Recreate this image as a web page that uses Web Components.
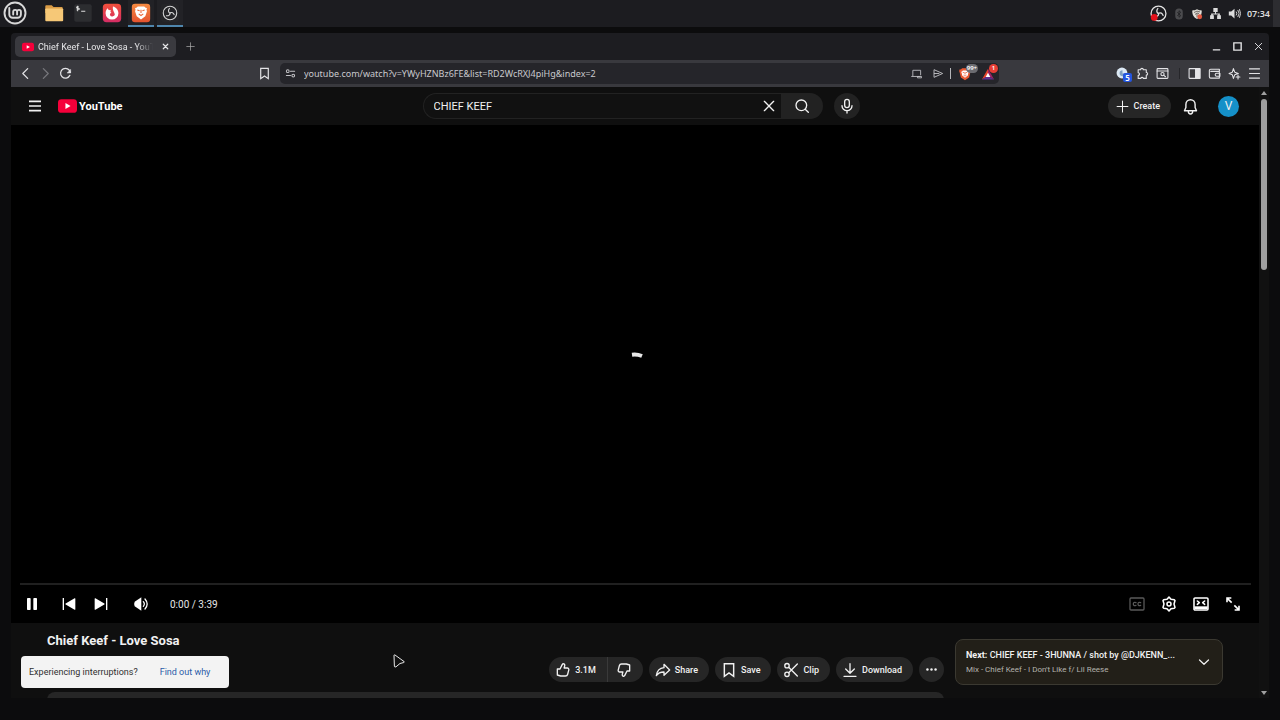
<!DOCTYPE html>
<html lang="en">
<head>
<meta charset="utf-8">
<meta name="viewport" content="width=device-width, initial-scale=1">
<title>Chief Keef - Love Sosa - YouTube</title>
<style>
  html, body { margin: 0; height: 100%; background: #0b0b0c; }
  body { font-family: Roboto, "Liberation Sans", sans-serif; color: #f1f1f1; overflow: hidden; }
</style>
</head>
<body>
<desk-top>
  <task-panel slot="panel"></task-panel>
  <browser-window>
    <tab-strip slot="tabs">Chief Keef - Love Sosa - YouTube</tab-strip>
    <nav-bar slot="nav" url="youtube.com/watch?v=YWyHZNBz6FE&amp;list=RD2WcRXJ4piHg&amp;index=2"></nav-bar>
    <yt-masthead query="CHIEF KEEF"></yt-masthead>
    <video-player time="0:00 / 3:39"></video-player>
    <watch-info>
      <span slot="title">Chief Keef - Love Sosa</span>
      <next-card slot="side">
        <span slot="label">Next:</span>
        <span slot="title">CHIEF KEEF - 3HUNNA / shot by @DJKENN_...</span>
        <span slot="list">Mix - Chief Keef - I Don't Like f/ Lil Reese</span>
      </next-card>
    </watch-info>
    <yt-toast slot="overlay">Experiencing interruptions?<a slot="action" href="#why">Find out why</a></yt-toast>
  </browser-window>
  <mouse-pointer slot="pointer"></mouse-pointer>
</desk-top>

<script>
const define = (name, html, setup) => customElements.define(name, class extends HTMLElement {
  constructor() {
    super();
    this.attachShadow({ mode: "open" }).innerHTML = BASE + html;
  }
  connectedCallback() { if (setup) setup(this, this.shadowRoot); }
});

const BASE = `<style>
  *, *::before, *::after { box-sizing: border-box; }
  :host { box-sizing: border-box; display: block; }
  button, input { font: inherit; color: inherit; background: none; border: 0; margin: 0; padding: 0; outline: 0; min-width: 0; }
  button { display: inline-flex; align-items: center; justify-content: center; cursor: pointer; flex: none; }
</style>`;

const line = (w, body, vb = 24) => `<svg viewBox="0 0 ${vb} ${vb}" fill="none" stroke="currentColor" stroke-width="${w}" stroke-linejoin="round" stroke-linecap="round">${body}</svg>`;
const solid = (body, vb = 24) => `<svg viewBox="0 0 ${vb} ${vb}" fill="currentColor">${body}</svg>`;
const THUMB = '<path d="M3.5 10.5h4L11 3.6c.3-.7 1-1.1 1.7-1 1.3.1 2.2 1.4 1.9 2.7L13.7 9h4.8c1.500 0 2.600 1.400 2.200 2.900l-1.700 6.500c-.4 1.500-1.700 2.600-3.300 2.600H8.500L3.500 19.500z"/>';
const ARM = '<path d="M12 12.500Q7.500 9 11.500 4.500"/>';
const OBS = `<circle cx="12" cy="12" r="10.500"/>${ARM}<g transform="rotate(120 12 12)">${ARM}</g><g transform="rotate(240 12 12)">${ARM}</g>`;

const ICONS = {
  mint: `<svg viewBox="0 0 24 24" fill="none" stroke="#d8d8d8"><circle cx="12" cy="12" r="10.500" stroke-width="1.900"/><path d="M6.300 7v6.500a3.300 3.300 0 0 0 3.300 3.300h5a3.300 3.300 0 0 0 3.300-3.300v-2.700a1.900 1.900 0 0 0-3.800 0v2.700M14.100 13.500v-2.700a1.900 1.900 0 0 0-3.900 0v2.700" stroke-width="1.900" stroke-linecap="round"/></svg>`,
  folder: `<svg viewBox="0 0 24 24"><path d="M2.500 4.500q0-1 1-1h6l2 2h9q1 0 1 1V12h-19z" fill="#d99b45"/><rect x="2.500" y="7" width="19.500" height="14" rx="1" fill="#f6c877"/></svg>`,
  terminal: `<svg viewBox="0 0 24 24"><rect x="2.500" y="2.500" width="19" height="19" rx="2" fill="#2c2d30"/><path d="M7.500 5.500q-2.500-.8-2.500.6t2.500 1.400-2.500 1.200M6.200 4v6M10 10h4.500" fill="none" stroke="#ddd" stroke-width="1.100"/></svg>`,
  firefox: `<svg viewBox="0 0 24 24"><defs><linearGradient id="g" x2="0" y2="1"><stop stop-color="#f2503b"/><stop offset="1" stop-color="#d52d65"/></linearGradient></defs><rect x="2" y="2" width="20" height="20" rx="4" fill="url(#g)"/><path d="M13 4.800c3.500.8 6 3.700 6 7.400a7 7 0 0 1-14 0c0-2.200.8-4.200 2.200-5.400l1.200 2 2.400.3-.6 1.700 1.200.8c-1 .3-1.700 1-1.700 1.900a2.600 2.600 0 1 0 4.900-1.500c-.4-1.500-2.300-3.800-1.600-7.200z" fill="#fff"/></svg>`,
  brave: `<svg viewBox="0 0 24 24"><defs><linearGradient id="g" x2="0" y2="1"><stop stop-color="#f58a41"/><stop offset="1" stop-color="#e4532f"/></linearGradient></defs><rect x="2" y="2" width="20" height="20" rx="3.500" fill="url(#g)"/><path d="M8.500 5h7l1.500 1.300 1.500.2-.5 2 .5 1.500-1.800 5.500L12 19l-4.700-3.500L5.500 10l.5-1.500-.5-2 1.500-.2z" fill="#fff"/><path d="M8 8.800l2.500.7M16 8.800l-2.500.7M12 8.500v3.500M9.500 13l2.500 1.800 2.500-1.800" fill="none" stroke="#e9683a" stroke-width="1.200"/></svg>`,
  obs: `<svg viewBox="0 0 24 24"><rect x="2" y="2" width="20" height="20" rx="4" fill="#252528"/><g transform="translate(3.600 3.600) scale(.7)" fill="none" stroke="#d5d5d5" stroke-width="1.700">${OBS}</g></svg>`,
  obsTray: `<svg viewBox="0 0 24 24"><g fill="none" stroke="#e5e5e5" stroke-width="1.800">${OBS}</g><circle cx="6" cy="17.500" r="4.800" fill="#e3101a"/></svg>`,
  bluetooth: `<svg viewBox="0 0 24 24"><rect x="4.500" y="1" width="15" height="22" rx="7" fill="#4b4b4e"/><path d="M8.500 8l7 7.500-3.500 3V5.500l3.500 3-7 7.500" fill="none" stroke="#1f1f22" stroke-width="1.500"/></svg>`,
  shield: `<svg viewBox="0 0 24 24"><path d="M12 2.500c3 2 6 2.300 9.500 2.300 0 8-2 13.500-9.500 17-7.500-3.500-9.500-9-9.500-17C6 4.800 9 4.500 12 2.500z" fill="#e2dfd8"/><path d="M6 9q6-5 12-1M8 13q4-5 8-2M12 11v8" fill="none" stroke="#65605a" stroke-width="1.800"/><circle cx="17.500" cy="17.500" r="4.800" fill="#e2573f"/></svg>`,
  network: solid('<path d="M8 2h8v7h-3v3h7v3h2v7h-7v-7h2v-1H7v1h2v7H2v-7h2v-3h7V9H8z"/>'),
  sound: `<svg viewBox="0 0 24 24"><path d="M1.500 8.500H6L12 3v18l-6-5.500H1.500z" fill="currentColor"/><path d="M15 8.500q2.500 3.500 0 7M18 5.500q5 6.500 0 13M21 4q4.500 8 0 16" fill="none" stroke="currentColor" stroke-width="1.700"/></svg>`,
  ytMark: `<svg viewBox="0 0 28 20"><rect width="28" height="20" rx="5" fill="#f5003a"/><path d="M11 5.700v8.600l7.500-4.300z" fill="#fff"/></svg>`,
  close: line(2, '<path d="M5 5l14 14M19 5L5 19"/>'),
  closeBold: line(3.200, '<path d="M6 6l12 12M18 6L6 18"/>'),
  plus: line(1.900, '<path d="M12 2v20M2 12h20"/>'),
  minimize: line(2.600, '<path d="M4 19.500h16" stroke-linecap="butt"/>'),
  maximize: line(3, '<path d="M4 4h16v16H4z" stroke-linejoin="miter"/>'),
  back: line(2.300, '<path d="M16 3l-9 9 9 9"/>'),
  forward: line(2.300, '<path d="M8 3l9 9-9 9"/>'),
  reload: line(2.300, '<path d="M20 15.500a9 9 0 1 1 .8-5.500"/><path d="M21.500 5v6h-6z" fill="currentColor" stroke-width="1"/>'),
  bookmark: line(2.200, '<path d="M5 2.500h14v19l-7-5-7 5z" stroke-linejoin="miter"/>'),
  tune: line(2.200, '<circle cx="6" cy="7" r="3"/><path d="M12 7h9M3 16.500h9"/><circle cx="18" cy="16.500" r="3"/>'),
  device: line(1.900, '<path d="M4 17V5h17v10M1.500 18.500h17M15 18.500h8v3h-8z"/>'),
  send: line(2, '<path d="M3 4l18 8-18 8zM3 12h10"/>'),
  lion: `<svg viewBox="0 0 24 24"><path d="M7 2h10l2 2.200 2-.2 1 3-1 3-2 8-7 4.500L5 18 3 10 2 7l1-3 2 .2z" fill="#e95a33"/><path d="M8.500 6h7l3 2.500-1.500 4 .2 1.500-5.200 4.500L6.800 14l.2-1.500-1.500-4z" fill="#fff"/><path d="M8 9l3 1M16 9l-3 1M12 9v4M9.500 14l2.500 1.700 2.500-1.700" fill="none" stroke="#e95a33" stroke-width="1.300"/></svg>`,
  bat: `<svg viewBox="0 0 24 24"><path d="M12 3L1.500 21.500 12 15z" fill="#e5432b"/><path d="M12 3l10.500 18.500L12 15z" fill="#9c2063"/><path d="M1.500 21.500h21L12 15z" fill="#5f2f8f"/><path d="M12 10l-4 7h8z" fill="#fff"/></svg>`,
  ext: `<svg viewBox="0 0 24 24"><circle cx="11" cy="11" r="10" fill="#dce8f4"/><path d="M12 6a5.500 5.500 0 1 0 5.500 6.500L12 12z" fill="#7f9fc0"/></svg>`,
  puzzle: line(2, '<path d="M4 5h4.500a2.500 2.500 0 0 1 5 0H19v5a2.500 2.500 0 0 1 0 5v6h-5.500a2.300 2.300 0 0 0-4.500 0H4v-5.500a2.500 2.500 0 0 0 0-5z"/>'),
  findPage: line(2, '<rect x="2" y="3" width="20" height="18" rx="1.500"/><path d="M2 7.500h20"/><circle cx="12" cy="13" r="3"/><path d="M14.500 15.500l3 2.500"/>'),
  sidebar: line(2, '<rect x="2" y="3" width="20" height="18" rx="1"/><path d="M14 3h8v18h-8z" fill="currentColor"/>'),
  wallet: line(2, '<path d="M21 8V4H5a2.500 2.500 0 0 0-2.500 2.500V18A2.500 2.500 0 0 0 5 20.500h16V8H5M22 11.500h-6a2.700 2.700 0 0 0 0 5.500h6z"/>'),
  leo: line(2, '<path d="M10 3l2.500 6.500L19 12l-6.500 2.500L10 21l-2-6.500L2 12l6-2.500zM18.500 15v7M15 18.500h7"/>'),
  menu: line(2, '<path d="M2 3.500h20M2 12h20M2 20.500h20" stroke-linecap="butt"/>'),
  menuBold: line(2.600, '<path d="M3 5h18M3 12h18M3 19h18" stroke-linecap="butt"/>'),
  search: line(2, '<circle cx="11" cy="11" r="8"/><path d="M16.800 16.800L21.500 21.500"/>'),
  mic: line(2, '<rect x="8.500" y="2" width="7" height="12.500" rx="3.500"/><path d="M4.500 11.500a7.500 7.500 0 0 0 15 0M12 19v3.500"/>'),
  bell: line(2, '<path d="M12 2.500a6.500 6.500 0 0 0-6.500 6.500v4.500L3.500 18h17l-2-4.500V9A6.500 6.500 0 0 0 12 2.500zM9 19.500a3 3 0 0 0 6 0"/>'),
  pause: solid('<rect x="4.500" y="3" width="5.500" height="18" rx="1.200"/><rect x="14" y="3" width="5.500" height="18" rx="1.200"/>'),
  prev: solid('<path d="M2.500 3h2v18h-2zM21.500 4.200v15.600q0 1.300-1.100.7L7 12.700q-1-.7 0-1.400L20.400 3.500q1.100-.6 1.100.7z"/>'),
  next: solid('<path d="M19.500 3h2v18h-2zM2.500 4.200v15.600q0 1.300 1.100.7L17 12.700q1-.7 0-1.400L3.600 3.500q-1.100-.6-1.100.7z"/>'),
  volume: `<svg viewBox="0 0 24 24"><path d="M12.500 1.800v20.400L2.500 15.500q-1.700-3.500 0-7z" fill="currentColor"/><path d="M15.500 8.500q3 3.500 0 7M18 4.500q6.500 7.500 0 15" fill="none" stroke="currentColor" stroke-width="1.900" stroke-linecap="round"/></svg>`,
  cc: line(1.900, '<rect x="1.500" y="3" width="21" height="18" rx="1.500"/><path d="M10.500 10q-4-1.500-4 2t4 2M17.500 10q-4-1.500-4 2t4 2"/>'),
  gear: line(2.300, '<path d="M12 1.500l3 3.500 5 .8 1 .9-1.500 5.300 1.500 5.300-1 .9-5 .8-3 3.500-3-3.500-5-.8-1-.9L4.500 12 3 6.700l1-.9L9 5z"/><circle cx="12" cy="12" r="3"/>'),
  theater: line(2.300, '<rect x="1.500" y="3" width="21" height="18" rx="1.500"/><path d="M2 17.500h20" stroke-width="4" stroke-linecap="butt"/><path d="M6.500 7.500L9.500 10l-3 2.500M17.500 7.500l-3 2.500 3 2.500"/>'),
  full: line(2.400, '<path d="M3 9.500V3h6.500M3.500 3.500L10 10M14.500 21H21v-6.500M20.500 20.500L14 14" stroke-linejoin="miter" stroke-linecap="butt"/>'),
  like: line(2, THUMB),
  dislike: line(2, `<g transform="rotate(180 12 12)">${THUMB}</g>`),
  share: line(2, '<path d="M13.500 3.500L22 12l-8.500 8v-5C8 15 4.500 16.500 2 20.500 3 13 7 9 13.500 8.500z"/>'),
  clip: line(2, '<circle cx="6" cy="5.500" r="3.300"/><circle cx="6" cy="18.500" r="3.300"/><path d="M8.500 8L21.500 21M8.500 16L21.500 3"/>'),
  download: line(2, '<path d="M12 2.500v14M5.500 10.500l6.500 6.500 6.500-6.500M3 21.500h18"/>'),
  more: solid('<circle cx="4.500" cy="12" r="2.300"/><circle cx="12" cy="12" r="2.300"/><circle cx="19.500" cy="12" r="2.300"/>'),
  chevron: line(2.500, '<path d="M3 8l9 8.500L21 8"/>')
};

define("ui-icon", `<style>
  :host { display: inline-block; flex: none; width: var(--size, 16px); height: var(--size, 16px); }
  svg { display: block; width: 100%; height: 100%; }
</style><span></span>`, (el, root) => { root.querySelector("span").innerHTML = ICONS[el.getAttribute("name")]; });

define("desk-top", `<style>
  :host { display: flex; flex-direction: column; height: 100vh; position: relative; background: #0c0c0d; }
  main { flex: 1; min-height: 0; display: flex; padding: 6px 11px 22px; }
  ::slotted(browser-window) { flex: 1; min-width: 0; }
</style><slot name="panel"></slot><main><slot></slot></main><slot name="pointer"></slot>`);

define("task-panel", `<style>
  :host { display: flex; align-items: stretch; justify-content: space-between; height: 27px; background: #1c1c20; color: #dcdcdc; font: 500 9px "Noto Sans", sans-serif; }
  nav, aside { display: flex; align-items: center; }
  nav { gap: 3px; padding-left: 2px; }
  nav button { width: 26px; height: 27px; --size: 22px; border-bottom: 2px solid transparent; }
  nav button.open { border-color: #4f86ad; background: #222226; }
  nav .start { --size: 24px; margin-right: 10px; }
  aside { --size: 13px; gap: 6px; }
  .time { font-weight: 600; }
  .edge { width: 7px; align-self: stretch; background: #2d2d31; margin-left: -3px; }
</style>
<nav aria-label="Applications">
  <button class="start" aria-label="Menu"><ui-icon name="mint"></ui-icon></button>
  <button aria-label="Files"><ui-icon name="folder"></ui-icon></button>
  <button aria-label="Terminal"><ui-icon name="terminal"></ui-icon></button>
  <button aria-label="Firefox"><ui-icon name="firefox"></ui-icon></button>
  <button class="open" aria-label="Brave"><ui-icon name="brave"></ui-icon></button>
  <button class="open" aria-label="OBS"><ui-icon name="obs"></ui-icon></button>
</nav>
<aside>
  <ui-icon name="obsTray" style="--size:17px"></ui-icon>
  <ui-icon name="bluetooth" style="--size:12px"></ui-icon>
  <ui-icon name="shield" style="--size:12px"></ui-icon>
  <ui-icon name="network"></ui-icon>
  <ui-icon name="sound"></ui-icon>
  <span class="time">07:34</span>
  <span class="edge"></span>
</aside>`);

define("browser-window", `<style>
  :host { display: flex; flex-direction: column; border-radius: 4px 4px 0 0; overflow: hidden; background: #0f0f0f; }
  .view { flex: 1; min-height: 0; display: flex; position: relative; }
  .page { flex: 1; min-width: 0; overflow: hidden; }
  ::slotted([slot=overlay]) { position: absolute; left: 10px; bottom: 10px; }
</style><slot name="tabs"></slot><slot name="nav"></slot>
<div class="view"><div class="page"><slot></slot></div><scroll-bar></scroll-bar><slot name="overlay"></slot></div>`);

define("scroll-bar", `<style>
  :host { width: 10px; display: flex; flex-direction: column; align-items: center; padding: 4px 0 3px; background: #111; }
  i { border: 3px solid transparent; }
  .up { border-top: 0; border-bottom: 4px solid #a0a0a0; }
  .down { border-bottom: 0; border-top: 4px solid #a0a0a0; }
  .track { flex: 1; width: 6px; padding: 4px 0; }
  .thumb { height: 29%; border-radius: 3px; background: #9f9f9f; }
</style><i class="up"></i><div class="track"><div class="thumb"></div></div><i class="down"></i>`);

define("tab-strip", `<style>
  :host { display: flex; align-items: center; height: 27px; padding: 0 5px 0 4px; background: #1d1d21; color: #e6e6e8; font-size: 9px; flex: none; }
  .tab { display: flex; align-items: center; width: 161px; height: 21px; padding: 0 6px 0 7px; border-radius: 5px; background: #3a3a3f; }
  .tab > ui-icon { --size: 12px; margin-right: 4px; }
  .name { flex: 1; min-width: 0; overflow: hidden; white-space: nowrap; -webkit-mask: linear-gradient(90deg, #000 85%, transparent); mask: linear-gradient(90deg, #000 85%, transparent); }
  .x { --size: 9px; margin-left: 8px; }
  .add { --size: 9px; margin-left: 10px; color: #aaa; }
  .win { display: flex; gap: 10px; margin-left: auto; --size: 11px; }
</style>
<div class="tab"><ui-icon name="ytMark"></ui-icon><span class="name"><slot></slot></span><button class="x" aria-label="Close tab"><ui-icon name="closeBold"></ui-icon></button></div>
<button class="add" aria-label="New tab"><ui-icon name="plus"></ui-icon></button>
<div class="win"><button aria-label="Minimize"><ui-icon name="minimize"></ui-icon></button><button aria-label="Maximize"><ui-icon name="maximize"></ui-icon></button><button aria-label="Close"><ui-icon name="close"></ui-icon></button></div>`);

define("nav-bar", `<style>
  :host { display: flex; align-items: center; height: 27px; padding: 0 8px; background: #39393e; color: #e3e3e6; flex: none; --size: 13px; }
  .go { display: flex; gap: 7px; }
  .dim { color: #77777c; }
  .mark { margin: 0 9px 0 186px; }
  .url { flex: 1; min-width: 0; display: flex; align-items: center; height: 21px; padding: 0 4px 0 5px; border-radius: 5px; background: #25252a; --size: 11px; }
  input { flex: 1; margin-left: 8px; font: 9px "Noto Sans", sans-serif; color: #c9c9cd; }
  .url button { color: #c2c2c6; }
  .url .send { margin-left: 11px; }
  .bar { width: 1px; height: 11px; background: #b5b5b8; margin: 0 7px 0 6px; }
  .badged { position: relative; --size: 14px; }
  .badged + .badged { margin-left: 9px; }
  .badge { position: absolute; right: -6px; top: -3px; min-width: 9px; height: 9px; border-radius: 5px; font: 600 6px/9px "Noto Sans", sans-serif; color: #fff; text-align: center; }
  .gray { background: #6b6b70; padding: 0 1px; }
  .red { background: #e83e35; right: -3px; }
  .blue { background: #2455e0; border-radius: 2px; top: 6px; right: -3px; font-size: 8px; }
  .tools { display: flex; align-items: center; gap: 7px; margin-left: 117px; }
  .sep { width: 1px; height: 11px; background: #26262a; margin: 0 1px 0 3px; }
</style>
<div class="go"><button aria-label="Back"><ui-icon name="back"></ui-icon></button><button class="dim" aria-label="Forward"><ui-icon name="forward"></ui-icon></button><button aria-label="Reload"><ui-icon name="reload"></ui-icon></button></div>
<button class="mark" aria-label="Bookmark"><ui-icon name="bookmark"></ui-icon></button>
<div class="url">
  <button aria-label="Site settings"><ui-icon name="tune"></ui-icon></button>
  <input type="text" aria-label="Address" spellcheck="false">
  <button aria-label="Send to device"><ui-icon name="device"></ui-icon></button>
  <button class="send" aria-label="Share page"><ui-icon name="send"></ui-icon></button>
  <span class="bar"></span>
  <button class="badged" aria-label="Shields"><ui-icon name="lion"></ui-icon><span class="badge gray">99+</span></button>
  <button class="badged" aria-label="Rewards"><ui-icon name="bat"></ui-icon><span class="badge red">1</span></button>
</div>
<div class="tools">
  <button class="badged" style="--size:13px" aria-label="Extension"><ui-icon name="ext"></ui-icon><span class="badge blue">5</span></button>
  <button aria-label="Extensions"><ui-icon name="puzzle"></ui-icon></button>
  <button aria-label="Find"><ui-icon name="findPage"></ui-icon></button>
  <span class="sep"></span>
  <button aria-label="Sidebar"><ui-icon name="sidebar"></ui-icon></button>
  <button aria-label="Wallet"><ui-icon name="wallet"></ui-icon></button>
  <button aria-label="Leo"><ui-icon name="leo"></ui-icon></button>
  <button aria-label="Settings"><ui-icon name="menu"></ui-icon></button>
</div>`, (el, root) => { root.querySelector("input").value = el.getAttribute("url"); });

define("yt-masthead", `<style>
  :host { display: grid; grid-template-columns: 1fr minmax(0, 437px) 1fr; align-items: center; height: 38px; padding: 0 4px 0 16px; background: #0f0f0f; --size: 16px; }
  .start, .end, .mid, form { display: flex; align-items: center; }
  .start { gap: 15px; }
  .logo { display: flex; align-items: center; gap: 2px; color: #fff; text-decoration: none; font-size: 11px; font-weight: 700; }
  .logo ui-icon { width: 19px; height: 14px; }
  .mid { gap: 11px; }
  form { flex: 1; min-width: 0; height: 26px; }
  .field { flex: 1; min-width: 0; height: 26px; display: flex; align-items: center; padding: 0 4px 0 10px; border: 1px solid #222; border-right: 0; border-radius: 13px 0 0 13px; background: #111; }
  input { flex: 1; font-size: 11px; }
  .find { width: 42px; height: 26px; border-radius: 0 13px 13px 0; background: #222; }
  .mic { width: 26px; height: 26px; border-radius: 13px; background: #222; }
  .end { justify-content: flex-end; padding-right: 16px; }
  .create { height: 24px; gap: 5px; padding: 0 11px 0 8px; border-radius: 12px; background: #262626; font-size: 9px; font-weight: 500; --size: 13px; }
  .bell { width: 24px; height: 24px; margin: 0 16px 0 7px; --size: 17px; }
  .me { width: 21px; height: 21px; border-radius: 50%; background: #1590c8; font-size: 12px; }
</style>
<div class="start"><button aria-label="Guide"><ui-icon name="menuBold"></ui-icon></button><a class="logo" href="#home"><ui-icon name="ytMark"></ui-icon><span>YouTube</span></a></div>
<div class="mid"><form role="search"><div class="field"><input type="text" aria-label="Search"><button type="button" aria-label="Clear"><ui-icon name="close"></ui-icon></button></div><button class="find" type="button" aria-label="Search"><ui-icon name="search"></ui-icon></button></form><button class="mic" aria-label="Voice search"><ui-icon name="mic"></ui-icon></button></div>
<div class="end"><button class="create"><ui-icon name="plus"></ui-icon>Create</button><button class="bell" aria-label="Notifications"><ui-icon name="bell"></ui-icon></button><button class="me" aria-label="Account">V</button></div>`,
(el, root) => { root.querySelector("input").value = el.getAttribute("query"); });

define("video-player", `<style>
  :host { display: flex; flex-direction: column; position: relative; height: calc(100vh - 222px); background: #000; color: #fff; }
  .stage { flex: 1; }
  .spin { position: absolute; inset: 0; margin: auto; width: 44px; height: 44px; }
  .progress { height: 2px; margin: 0 8px 0 9px; background: #202020; }
  .controls { display: flex; align-items: center; height: 38px; padding: 0 10px 0 5px; --size: 16px; }
  button { width: 32px; height: 32px; }
  .prev { margin-left: 5px; }
  .vol { margin: 0 13px 0 8px; }
  .time { flex: 1; font-size: 10px; font-weight: 400; color: #e6e6e6; }
  .off { color: #5a5a5a; }
</style>
<div class="stage"></div>
<svg class="spin" viewBox="0 0 44 44"><path d="M19 2.700A19.500 19.500 0 0 1 29 4" fill="none" stroke="#e6e6e6" stroke-width="4"/></svg>
<div class="progress"></div>
<div class="controls">
  <button aria-label="Pause"><ui-icon name="pause"></ui-icon></button>
  <button class="prev" aria-label="Previous"><ui-icon name="prev"></ui-icon></button>
  <button aria-label="Next"><ui-icon name="next"></ui-icon></button>
  <button class="vol" aria-label="Mute"><ui-icon name="volume"></ui-icon></button>
  <span class="time"></span>
  <button class="off" aria-label="Subtitles"><ui-icon name="cc"></ui-icon></button>
  <button aria-label="Settings"><ui-icon name="gear"></ui-icon></button>
  <button aria-label="Default view"><ui-icon name="theater"></ui-icon></button>
  <button aria-label="Full screen"><ui-icon name="full"></ui-icon></button>
</div>`, (el, root) => { root.querySelector(".time").textContent = el.getAttribute("time"); });

define("action-pill", `<style>
  :host { flex: none; }
  button { height: 25px; gap: 4px; padding: 0 11px 0 6px; border-radius: 13px; background: #262626; color: #f1f1f1; font-size: 9px; font-weight: 500; }
  :host([side=left]) button { border-radius: 13px 0 0 13px; border-right: 1px solid #3a3a3a; }
  :host([side=right]) button { border-radius: 0 13px 13px 0; padding: 0 11px 0 8px; gap: 0; }
  :host([round]) button { width: 25px; padding: 0; gap: 0; --size: 13px; }
</style><button><span class="icon"></span><slot></slot></button>`, (el, root) => {
  const icon = document.createElement("ui-icon");
  icon.setAttribute("name", el.getAttribute("icon"));
  root.querySelector(".icon").replaceWith(icon);
  if (el.hasAttribute("label")) root.querySelector("button").setAttribute("aria-label", el.getAttribute("label"));
});

define("watch-info", `<style>
  :host { display: grid; grid-template-columns: minmax(0, 1fr) 268px; align-items: start; gap: 11px; padding: 0 36px; background: #0f0f0f; }
  h1 { margin: 0; padding: 10px 0 8px; font-size: 13px; line-height: 16px; font-weight: 700; }
  .actions { display: flex; justify-content: flex-end; gap: 6px; }
  .pair { display: flex; }
  .about { height: 80px; margin-top: 10px; border-radius: 8px; background: #262626; }
  ::slotted(next-card) { margin-top: 16px; }
</style>
<div><h1><slot name="title"></slot></h1>
<div class="actions">
  <div class="pair"><action-pill side="left" icon="like">3.1M</action-pill><action-pill side="right" icon="dislike" label="Dislike"></action-pill></div>
  <action-pill icon="share">Share</action-pill>
  <action-pill icon="bookmark">Save</action-pill>
  <action-pill icon="clip">Clip</action-pill>
  <action-pill icon="download">Download</action-pill>
  <action-pill round icon="more" label="More actions"></action-pill>
</div>
<div class="about"></div></div>
<slot name="side"></slot>`);

define("next-card", `<style>
  :host { display: flex; align-items: center; height: 46px; padding: 0 10px; border: 1px solid #3b3931; border-radius: 8px; background: #221f18; }
  .text { flex: 1; min-width: 0; }
  p { margin: 0; white-space: nowrap; overflow: hidden; text-overflow: ellipsis; }
  .top { font-size: 9px; line-height: 16px; font-weight: 500; color: #f1f1f1; }
  .top b { font-weight: 700; }
  .sub { font-size: 8px; line-height: 14px; color: #b5b3ae; }
  button { width: 16px; height: 32px; margin-left: 16px; --size: 12px; }
</style>
<div class="text"><p class="top"><b><slot name="label"></slot></b> <slot name="title"></slot></p><p class="sub"><slot name="list"></slot></p></div>
<button aria-label="Expand playlist"><ui-icon name="chevron"></ui-icon></button>`);

define("yt-toast", `<style>
  :host { display: flex; align-items: center; gap: 22px; height: 32px; padding: 0 19px 0 8px; border-radius: 4px; background: #f3f3f3; color: #303030; font-size: 9px; white-space: nowrap; }
  ::slotted(a) { color: #2a5ba8; text-decoration: none; }
</style><span><slot></slot></span><slot name="action"></slot>`);

define("mouse-pointer", `<style>
  :host { position: absolute; left: 393px; bottom: 52px; width: 12px; height: 14px; pointer-events: none; }
  svg { display: block; width: 100%; height: 100%; }
</style><svg viewBox="0 0 12 14"><path d="M1 1.500q0-1 1-.5l9 6.500q.8.700-.2 1L7 9.500 3 12.800q-1.500.7-1.600-.5z" fill="#111" stroke="#e8e8e8" stroke-width="1"/></svg>`);
</script>
</body>
</html>
